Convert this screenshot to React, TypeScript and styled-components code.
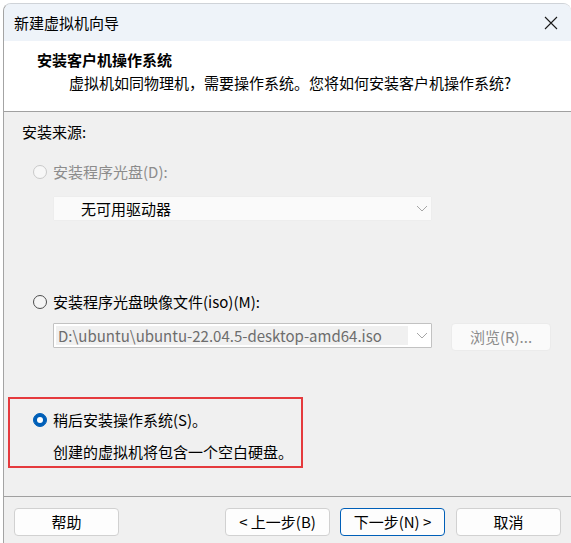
import React from "react";
import styled, { createGlobalStyle } from "styled-components";

const Global = createGlobalStyle`
  html, body { margin: 0; padding: 0; background: #ffffff; }
  body {
    font-family: "Noto Sans CJK SC", "Noto Sans", sans-serif;
    font-size: 15px;
    color: #000;
    overflow: hidden;
  }
`;

const Window = styled.div`
  margin: 3px 0 0 3px;
  width: 567px;
  height: 540px;
  border-left: 1px solid #a4a4a4;
  border-top: 1px solid #cfd3d8;
  border-radius: 8px 8px 0 0;
  overflow: hidden;
  display: flex;
  flex-direction: column;
  background: #f0f0f0;
`;

const TitleBar = styled.div`
  height: 37px;
  flex: none;
  background: #eef3f9;
  display: flex;
  align-items: center;
  justify-content: space-between;
  padding: 0 13px 0 10px;
  font-size: 15px;
  line-height: 20px;
`;

const CloseButton = styled.div`
  width: 14px;
  height: 14px;
  display: flex;
  align-items: center;
  justify-content: center;
`;

const Header = styled.div`
  flex: none;
  height: 71px;
  box-sizing: border-box;
  background: #ffffff;
  border-bottom: 1px solid #a0a0a0;
  padding: 9px 0 0 33px;
  display: flex;
  flex-direction: column;
  gap: 3px;
`;

const HeaderTitle = styled.div`
  font-weight: 700;
  line-height: 20px;
`;

const HeaderSub = styled.div`
  line-height: 20px;
  padding-left: 32px;
`;

const Body = styled.div`
  flex: 1;
  display: flex;
  flex-direction: column;
  padding: 10px 0 0 18px;
  border-bottom: 1px solid #a0a0a0;
`;

const Label = styled.div`
  line-height: 20px;
`;

const RadioRow = styled.label<{ $disabled?: boolean; $top: number; $left?: number }>`
  display: flex;
  align-items: center;
  gap: 6px;
  margin-top: ${(p) => p.$top}px;
  margin-left: ${(p) => p.$left ?? 11}px;
  line-height: 20px;
  color: ${(p) => (p.$disabled ? "#8c8c8c" : "#000")};
`;

const RadioCircle = styled.span<{ $state: "disabled" | "off" | "on" }>`
  width: 14px;
  height: 14px;
  box-sizing: border-box;
  border-radius: 50%;
  flex: none;
  display: flex;
  align-items: center;
  justify-content: center;
  background: ${(p) =>
    p.$state === "on" ? "#005fb8" : p.$state === "disabled" ? "#f7f7f7" : "#f5f5f5"};
  border: 1px solid
    ${(p) => (p.$state === "on" ? "#005fb8" : p.$state === "disabled" ? "#c9c9c9" : "#4d4d4d")};
  &::after {
    content: "";
    display: ${(p) => (p.$state === "on" ? "block" : "none")};
    width: 6px;
    height: 6px;
    border-radius: 50%;
    background: #ffffff;
  }
`;

const Combo = styled.div<{ $top: number; $bordered?: boolean }>`
  margin-top: ${(p) => p.$top}px;
  margin-left: 31px;
  width: 379px;
  height: 25px;
  box-sizing: border-box;
  display: flex;
  align-items: center;
  justify-content: space-between;
  padding: 0 3px 0 2px;
  background: ${(p) => (p.$bordered ? "#ffffff" : "#fafafa")};
  border: 1px solid ${(p) => (p.$bordered ? "#c2c2c2" : "#ededed")};
  border-radius: 1px;
`;

const ComboText = styled.div<{ $selected?: boolean }>`
  line-height: 19px;
  height: 19px;
  padding-left: ${(p) => (p.$selected ? "2px" : "25px")};
  width: ${(p) => (p.$selected ? "352px" : "auto")};
  box-sizing: border-box;
  background: ${(p) => (p.$selected ? "#f0f0f0" : "transparent")};
  color: ${(p) => (p.$selected ? "#6d6d6d" : "#000")};
  white-space: nowrap;
  overflow: hidden;
`;

const ComboRow = styled.div`
  display: flex;
  align-items: flex-start;
  gap: 19px;
`;

const BrowseButton = styled.div`
  margin-top: 11px;
  width: 100px;
  height: 28px;
  box-sizing: border-box;
  background: #fafafa;
  border: 1px solid #ebebeb;
  border-radius: 4px;
  color: #8c8c8c;
  display: flex;
  align-items: center;
  justify-content: center;
  line-height: 20px;
`;

const Highlight = styled.div`
  margin-top: 46px;
  margin-left: -14px;
  width: 295px;
  height: 71px;
  box-sizing: border-box;
  border: 2px solid #e53a3d;
  display: flex;
  flex-direction: column;
`;

const Note = styled.div`
  margin-left: 43px;
  margin-top: 12px;
  line-height: 20px;
`;

const Footer = styled.div`
  flex: none;
  height: 36px;
  display: flex;
  align-items: flex-start;
  padding: 11px 0 0 10px;
`;

const Button = styled.div<{ $primary?: boolean; $left: number }>`
  margin-left: ${(p) => p.$left}px;
  width: 105px;
  height: 28px;
  box-sizing: border-box;
  background: #fdfdfd;
  border: 1px solid ${(p) => (p.$primary ? "#005fb8" : "#d1d1d1")};
  border-radius: 4px;
  display: flex;
  align-items: center;
  justify-content: center;
  line-height: 20px;
  white-space: pre;
`;

const Chevron = () => (
  <svg width="12" height="7" viewBox="0 0 12 7">
    <path d="M1 1 L6 6 L11 1" fill="none" stroke="#a6a6a6" strokeWidth="1" />
  </svg>
);

export default function App() {
  return (
    <>
      <Global />
      <Window>
        <TitleBar>
          <span>新建虚拟机向导</span>
          <CloseButton>
            <svg width="14" height="14" viewBox="0 0 14 14">
              <path d="M1 1 L13 13 M13 1 L1 13" stroke="#1a1a1a" strokeWidth="1.1" />
            </svg>
          </CloseButton>
        </TitleBar>
        <Header>
          <HeaderTitle>安装客户机操作系统</HeaderTitle>
          <HeaderSub>虚拟机如同物理机，需要操作系统。您将如何安装客户机操作系统?</HeaderSub>
        </Header>
        <Body>
          <Label>安装来源:</Label>
          <RadioRow $disabled $top={20}>
            <RadioCircle $state="disabled" />
            安装程序光盘(D):
          </RadioRow>
          <Combo $top={14}>
            <ComboText>无可用驱动器</ComboText>
            <Chevron />
          </Combo>
          <RadioRow $top={71}>
            <RadioCircle $state="off" />
            安装程序光盘映像文件(iso)(M):
          </RadioRow>
          <ComboRow>
            <Combo $top={11} $bordered>
              <ComboText $selected>D:\ubuntu\ubuntu-22.04.5-desktop-amd64.iso</ComboText>
              <Chevron />
            </Combo>
            <BrowseButton>浏览(R)...</BrowseButton>
          </ComboRow>
          <Highlight>
            <RadioRow $top={11} $left={23}>
              <RadioCircle $state="on" />
              稍后安装操作系统(S)。
            </RadioRow>
            <Note>创建的虚拟机将包含一个空白硬盘。</Note>
          </Highlight>
        </Body>
        <Footer>
          <Button $left={0}>帮助</Button>
          <Button $left={106}>{"< 上一步(B)"}</Button>
          <Button $left={10} $primary>{"下一步(N) >"}</Button>
          <Button $left={11}>取消</Button>
        </Footer>
      </Window>
    </>
  );
}
